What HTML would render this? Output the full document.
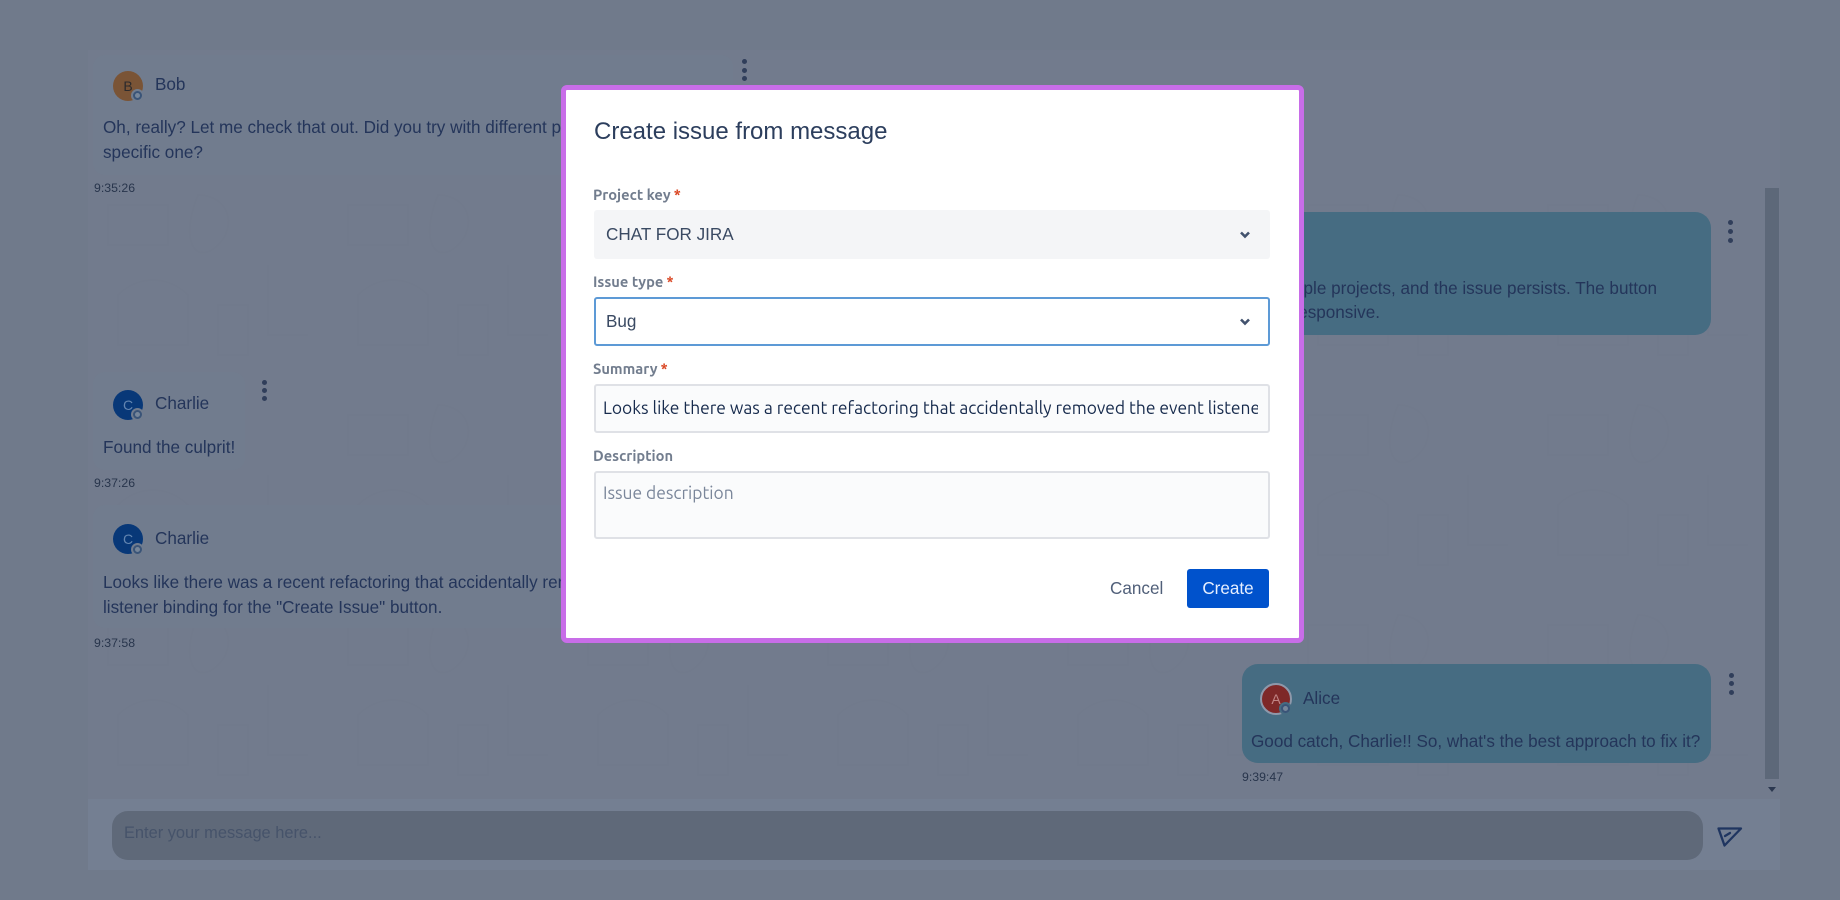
<!DOCTYPE html>
<html lang="en">
<head>
<meta charset="utf-8">
<title>Create issue from message</title>
<style>
html,body{margin:0;padding:0;width:1840px;height:900px;overflow:hidden;background:#707a8b;font-family:"Liberation Sans",sans-serif}
.a{position:absolute;white-space:nowrap}
#chat{position:absolute;left:88px;top:50px;width:1692px;height:750px;background:#727b8d}
.bubble{position:absolute;background:#717c8e;border-radius:12px}
.blue{background:#466c82;border-radius:16px}
.msg{font-size:17.12px;line-height:24px;color:#24355a}
.name{font-size:17.12px;line-height:24px;color:#24355a}
.time{font-size:12.3px;line-height:14px;color:#28354c}
.av{position:absolute;width:30px;height:30px;border-radius:50%;font-size:14px;line-height:30px;text-align:center}
.badge{position:absolute;width:13px;height:13px;border-radius:50%;background:#717c8e;box-sizing:border-box}
.badge:after{content:"";position:absolute;left:2px;top:2px;width:9px;height:9px;box-sizing:border-box;border-radius:50%;border:2px solid #3a5478;background:#76869a}
.dot{position:absolute;width:5px;height:5px;border-radius:50%;background:#303e5a}
#modal{position:absolute;left:561px;top:85px;width:743px;height:558px;box-sizing:border-box;border:5px solid #c86de8;border-radius:6px;background:#fff}
.title{font-size:24px;line-height:30px;color:#2c3e5d}
.lab{font-family:Ubuntu,"Noto Sans CJK JP",sans-serif;font-size:14.7px;font-weight:700;line-height:18px;color:#727d8e}
.lab b{color:#d9431f;font-weight:700;margin-left:3px}
.field{position:absolute;left:594px;width:676px;box-sizing:border-box;border-radius:3px}
.val{font-size:17.12px;line-height:20px;color:#3a4a63}
.ub{font-family:Ubuntu,"Noto Sans CJK JP",sans-serif;font-size:17.4px;line-height:20px}
</style>
</head>
<body>
<div id="chat"></div>
<svg class="a" style="left:88px;top:175px" width="1692" height="625" fill="none" stroke="#3c465a" stroke-opacity=".015" stroke-width="2">
<defs><pattern id="dd" width="240" height="210" patternUnits="userSpaceOnUse"><path d="M20 30h60v40H20zM110 20c30 0 40 30 20 50s-40 0-20-50zM180 90v70h40M30 120c20-20 50-20 70 0v50H30zM130 130h30v50h-30z"/></pattern></defs>
<rect width="1692" height="625" fill="url(#dd)" stroke="none"/>
</svg>

<!-- Bob -->
<div class="bubble" style="left:93px;top:55px;width:640px;height:120px"></div>
<div class="av" style="left:113px;top:71px;background:#7a5436;color:#2c2a2c">B</div>
<div class="badge" style="left:131px;top:89px"></div>
<div class="a name" style="left:155px;top:73px">Bob</div>
<div class="a msg" style="left:103px;top:116px">Oh, really? Let me check that out. Did you try with different projects, or just a</div>
<div class="a msg" style="left:103px;top:141px">specific one?</div>
<div class="a time" style="left:94px;top:181px">9:35:26</div>
<div class="dot" style="left:742px;top:59px"></div>
<div class="dot" style="left:742px;top:68px"></div>
<div class="dot" style="left:742px;top:76px"></div>

<!-- Alice 1 -->
<div class="bubble blue" style="left:1100px;top:212px;width:611px;height:123px"></div>
<div class="a msg" style="right:183px;top:277px">Yes, I tried with multiple projects, and the issue persists. The button</div>
<div class="a msg" style="left:1000px;top:301px;width:380px;text-align:right">just seems unresponsive.</div>
<div class="dot" style="left:1728px;top:220px"></div>
<div class="dot" style="left:1728px;top:229px"></div>
<div class="dot" style="left:1728px;top:238px"></div>

<!-- Charlie 1 -->
<div class="bubble" style="left:93px;top:372px;width:152px;height:98px"></div>
<div class="av" style="left:113px;top:390px;background:#083878;color:#6385b0">C</div>
<div class="badge" style="left:131px;top:408px"></div>
<div class="a name" style="left:155px;top:392px">Charlie</div>
<div class="a msg" style="left:103px;top:436px">Found the culprit!</div>
<div class="a time" style="left:94px;top:476px">9:37:26</div>
<div class="dot" style="left:262px;top:380px"></div>
<div class="dot" style="left:262px;top:388px"></div>
<div class="dot" style="left:262px;top:396px"></div>

<!-- Charlie 2 -->
<div class="bubble" style="left:93px;top:505px;width:640px;height:123px"></div>
<div class="av" style="left:113px;top:524px;background:#083878;color:#6385b0">C</div>
<div class="badge" style="left:131px;top:543px"></div>
<div class="a name" style="left:155px;top:527px">Charlie</div>
<div class="a msg" style="left:103px;top:571px">Looks like there was a recent refactoring that accidentally removed the event</div>
<div class="a msg" style="left:103px;top:596px">listener binding for the "Create Issue" button.</div>
<div class="a time" style="left:94px;top:636px">9:37:58</div>

<!-- Alice 2 -->
<div class="bubble blue" style="left:1242px;top:664px;width:469px;height:99px"></div>
<div class="av" style="left:1260px;top:683px;width:28px;height:28px;line-height:28px;background:#7e2828;color:#c08484;border:2px solid #8f98aa">A</div>
<div class="badge" style="left:1279px;top:702px;background:#466c82"></div>
<div class="a name" style="left:1303px;top:687px">Alice</div>
<div class="a msg" style="left:1251px;top:730px">Good catch, Charlie!! So, what's the best approach to fix it?</div>
<div class="a time" style="left:1242px;top:770px">9:39:47</div>
<div class="dot" style="left:1729px;top:673px"></div>
<div class="dot" style="left:1729px;top:681px"></div>
<div class="dot" style="left:1729px;top:690px"></div>

<!-- Scrollbar -->
<div class="a" style="left:1765px;top:188px;width:14px;height:591px;background:#5d6879"></div>
<div class="a" style="left:1768px;top:787px;width:0;height:0;border-left:4px solid transparent;border-right:4px solid transparent;border-top:5px solid #2c3850"></div>

<!-- Composer -->
<div class="a" style="left:88px;top:799px;width:1692px;height:71px;background:#747f92"></div>
<div class="a" style="left:112px;top:811px;width:1591px;height:49px;background:#5f6979;border-radius:16px"></div>
<div class="a" style="left:124px;top:823px;font-size:16.4px;line-height:20px;color:#46536a">Enter your message here...</div>
<svg class="a" style="left:1716px;top:826px" width="28" height="22" viewBox="0 0 28 22" fill="none" stroke="#1f3560" stroke-width="2.3" stroke-linejoin="round" stroke-linecap="round"><path d="M2.5 2.5H25L8.5 19.5Z"/><path d="M9 10L14 7"/></svg>

<!-- Modal -->
<div id="modal"></div>
<div class="a title" style="left:594px;top:117px">Create issue from message</div>

<div class="a lab" style="left:593px;top:186px">Project key<b>*</b></div>
<div class="field" style="top:210px;height:49px;background:#f4f5f7"></div>
<div class="a val" style="left:606px;top:225px">CHAT FOR JIRA</div>
<svg class="a" style="left:1240px;top:231px" width="10" height="8" viewBox="0 0 10 8" fill="none" stroke="#42526e" stroke-width="2.6"><path d="M1 1.5L5 5.5L9 1.5"/></svg>

<div class="a lab" style="left:593px;top:273px">Issue type<b>*</b></div>
<div class="field" style="top:297px;height:49px;background:#fff;border:2px solid #5d9ad6"></div>
<div class="a val" style="left:606px;top:312px">Bug</div>
<svg class="a" style="left:1240px;top:318px" width="10" height="8" viewBox="0 0 10 8" fill="none" stroke="#42526e" stroke-width="2.6"><path d="M1 1.5L5 5.5L9 1.5"/></svg>

<div class="a lab" style="left:593px;top:360px">Summary<b>*</b></div>
<div class="field" style="top:384px;height:49px;background:#fafbfc;border:2px solid #dfe1e6"></div>
<div class="a ub" style="left:603px;top:399px;width:655px;overflow:hidden;color:#172b4d">Looks like there was a recent refactoring that accidentally removed the event listener binding for the "Create Issue" button.</div>

<div class="a lab" style="left:593px;top:447px">Description</div>
<div class="field" style="top:471px;height:68px;background:#fafbfc;border:2px solid #dfe1e6"></div>
<div class="a ub" style="left:603px;top:484px;color:#7a869a">Issue description</div>

<div class="a val" style="left:1110px;top:579px;color:#505f79">Cancel</div>
<div class="a" style="left:1187px;top:569px;width:82px;height:39px;background:#0052cc;border-radius:3px;color:#e6efff;font-size:17.12px;line-height:40px;text-align:center">Create</div>
</body>
</html>
